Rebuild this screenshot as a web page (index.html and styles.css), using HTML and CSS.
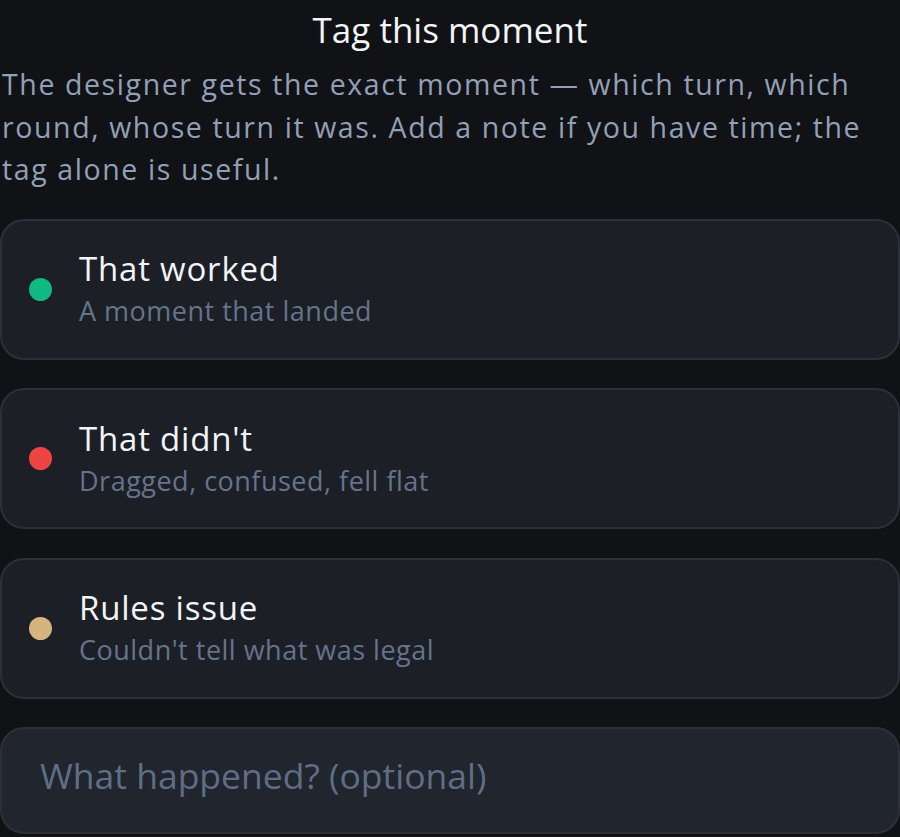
FILE: index.html
```html
<!DOCTYPE html>
<html lang="en">
<head>
  <meta charset="UTF-8" />
  <title>Tag this moment</title>
  <link rel="stylesheet" href="styles.css">
</head>
<body>
  <div class="sheet">
    <h1 class="sheet-title">Tag this moment</h1>
    <p class="sheet-intro">
      The designer gets the exact moment — which turn, which round, whose turn it was. Add a note if you have time; the tag alone is useful.
    </p>

    <div class="tag-list">
      <button class="tag-option">
        <span class="dot dot-good"></span>
        <span class="tag-text">
          <span class="tag-label">That worked</span>
          <span class="tag-hint">A moment that landed</span>
        </span>
      </button>
      <button class="tag-option">
        <span class="dot dot-bad"></span>
        <span class="tag-text">
          <span class="tag-label">That didn't</span>
          <span class="tag-hint">Dragged, confused, fell flat</span>
        </span>
      </button>
      <button class="tag-option">
        <span class="dot dot-rules"></span>
        <span class="tag-text">
          <span class="tag-label">Rules issue</span>
          <span class="tag-hint">Couldn't tell what was legal</span>
        </span>
      </button>

      <!-- optional free text note -->
      <input class="note-input" type="text" placeholder="What happened? (optional)" />
    </div>
  </div>
</body>
</html>
```

FILE: styles.css
```css
body {
  margin: 0;
  background-color: #111216;
  color: #f3f4f6;
  font-family: "Open Sans", "Noto Sans", sans-serif;
}

.sheet {
  padding: 6px 0 0 0;
}

.sheet-title {
  margin: 0;
  text-align: center;
  font-size: 35px;
  font-weight: 400;
  line-height: 48px;
}

.sheet-intro {
  margin: 9px 0 0 0;
  padding: 0 2px;
  font-size: 28.5px;
  line-height: 42.5px;
  letter-spacing: 1.6px;
  color: #91a0b7;
}

.tag-list {
  display: flex;
  flex-direction: column;
  gap: 28.5px;
  margin-top: 28px;
}

.tag-option {
  display: flex;
  align-items: center;
  gap: 27px;
  height: 141px;
  padding: 0 27px;
  background-color: #1c1f26;
  border: 2px solid #2b3039;
  border-radius: 24px;
  font-family: inherit;
  text-align: left;
  cursor: pointer;
}

.dot {
  width: 23px;
  height: 23px;
  border-radius: 50%;
  flex-shrink: 0;
}

.dot-good { background-color: #10b981; }
.dot-bad { background-color: #ef4444; }
.dot-rules { background-color: #d6b480; }

.tag-text {
  display: flex;
  flex-direction: column;
  gap: 4px;
}

.tag-label {
  font-size: 33px;
  line-height: 40px;
  letter-spacing: 0.8px;
  color: #f3f4f6;
}

.tag-hint {
  font-size: 27px;
  line-height: 36px;
  letter-spacing: 0.5px;
  color: #64748b;
}

.note-input {
  box-sizing: border-box;
  height: 107px;
  padding: 0 38px 12px 38px;
  background-color: #21252e;
  border: 2px solid #2b3039;
  border-radius: 24px;
  font-family: inherit;
  font-size: 35.5px;
  color: #f3f4f6;
  outline: none;
}

.note-input::placeholder {
  color: #5f6e85;
}
```
